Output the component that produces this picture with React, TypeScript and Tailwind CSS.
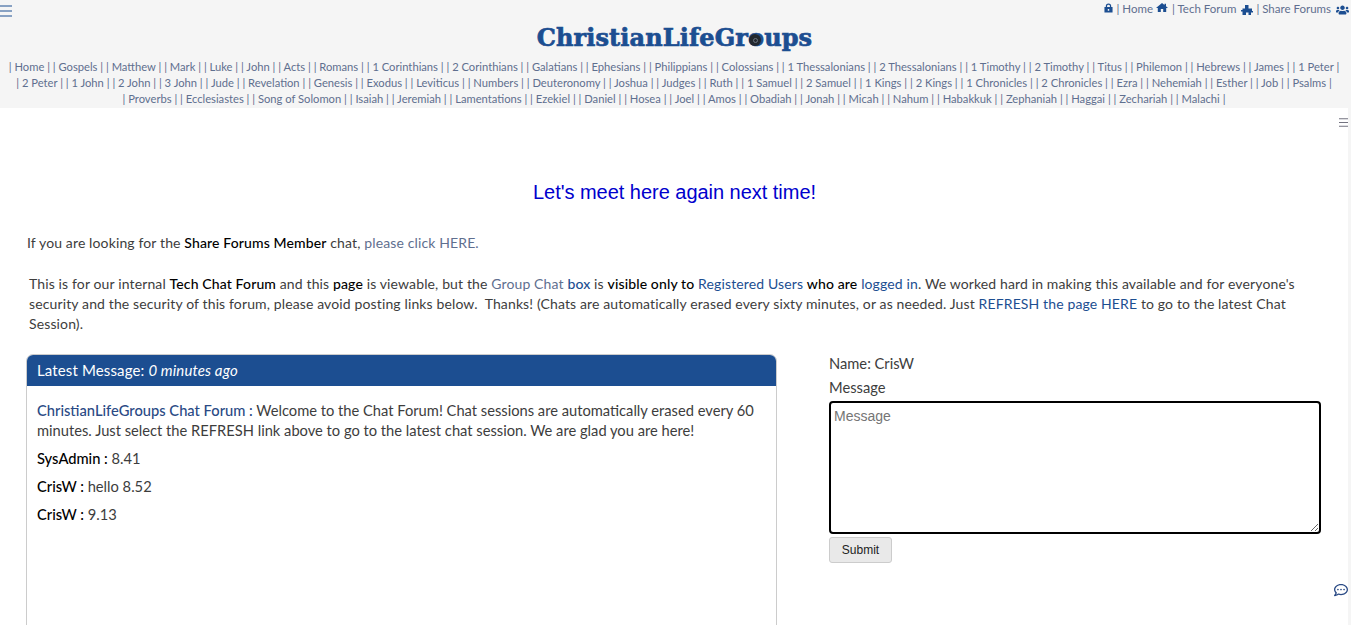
import { FaUsers, FaRegCommentDots } from 'react-icons/fa';

const bibleLines = [
  ['Home', 'Gospels', 'Matthew', 'Mark', 'Luke', 'John', 'Acts', 'Romans', '1 Corinthians', '2 Corinthians', 'Galatians', 'Ephesians', 'Philippians', 'Colossians', '1 Thessalonians', '2 Thessalonians', '1 Timothy', '2 Timothy', 'Titus', 'Philemon', 'Hebrews', 'James', '1 Peter'],
  ['2 Peter', '1 John', '2 John', '3 John', 'Jude', 'Revelation', 'Genesis', 'Exodus', 'Leviticus', 'Numbers', 'Deuteronomy', 'Joshua', 'Judges', 'Ruth', '1 Samuel', '2 Samuel', '1 Kings', '2 Kings', '1 Chronicles', '2 Chronicles', 'Ezra', 'Nehemiah', 'Esther', 'Job', 'Psalms'],
  ['Proverbs', 'Ecclesiastes', 'Song of Solomon', 'Isaiah', 'Jeremiah', 'Lamentations', 'Ezekiel', 'Daniel', 'Hosea', 'Joel', 'Amos', 'Obadiah', 'Jonah', 'Micah', 'Nahum', 'Habakkuk', 'Zephaniah', 'Haggai', 'Zechariah', 'Malachi'],
];

function Hamburger({ className }: { className: string }) {
  return (
    <svg viewBox="0 0 12 12" className={className} fill="none" stroke="currentColor" strokeWidth="1">
      <path d="M0 1h12M0 6h12M0 11h12" />
    </svg>
  );
}

function LockIcon() {
  return (
    <svg viewBox="0 0 10 10" className="mb-[3px] h-[10px] w-[9px]" fill="currentColor">
      <path fillRule="evenodd" d="M2 4V3a3 3 0 0 1 6 0v1h1.500v6H.5V4zM3.400 4h3.200V3a1.600 1.600 0 0 0-3.200 0zM4.200 6v2h1.600V6z" />
    </svg>
  );
}

function HomeIcon() {
  return (
    <svg viewBox="0 0 12 9" className="mb-[3px] h-[9px] w-[12px]" fill="currentColor">
      <path d="M6 0l2.500 2V.8h1.500v2.400L12 5h-1.800v4H7.200V6H4.800v3H1.800V5H0z" />
    </svg>
  );
}

function BranchIcon() {
  return (
    <svg viewBox="0 0 12 10" className="mt-[1px] h-[10px] w-[12px]" fill="currentColor">
      <path d="M4 0h3.500v3.500H11V6h1v1.500H10V10H7.500V7.500H5V10H1.500V6.500H0V5h1.500V3.500H4z" />
    </svg>
  );
}

export default function App() {
  return (
    <div className="relative h-[625px] overflow-hidden bg-white font-['Lato',sans-serif] text-[14px] tracking-[0.13px] text-[#3d3d3d]">
      <header className="relative h-[108px] bg-[#f5f5f5] pt-[25px] text-center tracking-normal">
        <Hamburger className="absolute left-0 top-[5px] h-[12px] w-[12px] text-[#1c4e91]" />
        <div className="absolute right-[2px] top-0 flex items-center text-[11.5px] leading-[18px] text-[#5f6f8f]">
          <span className="text-[#1c4e91]"><LockIcon /></span>
          <span className="ml-[4px]">| Home</span>
          <span className="ml-[3px] text-[#1c4e91]"><HomeIcon /></span>
          <span className="ml-[4px]">| Tech Forum</span>
          <span className="ml-[5px] text-[#1c4e91]"><BranchIcon /></span>
          <span className="ml-[3px]">| Share Forums</span>
          <FaUsers className="ml-[5px] mt-[2px] h-[14px] w-[13px] text-[#1c4e91]" />
        </div>
        <div className="pr-[2px] font-['DejaVu_Serif',serif] text-[24px] font-bold leading-[26px] tracking-[0.1px] text-[#1c4e91] [-webkit-text-stroke:0.7px_#1c4e91]">
          ChristianLifeGr
          <span className="relative">
            o
            <span className="absolute left-[calc(50%-1px)] top-[11px] flex h-[12px] w-[12px] -translate-x-1/2 items-center justify-center rounded-full bg-[#23282e] [-webkit-text-stroke:0]">
              <span className="h-[5px] w-[5px] rounded-full border border-[#6b7480]" />
            </span>
          </span>
          ups
        </div>
        <nav className="mt-[8px] pr-[3px] text-[11.2px] leading-[16px] text-[#5f6f8f]">
          {bibleLines.map((line, i) => (
            <div key={i} className="whitespace-nowrap">
              {line.map((b) => `| ${b} |`).join(' ')}
            </div>
          ))}
        </nav>
      </header>

      <main className="relative px-[27px]">
        <Hamburger className="absolute right-[3px] top-[10px] h-[9px] w-[9px] text-[#445]" />
        <h1 className="pt-[72px] pr-[2px] text-center font-['Liberation_Sans',sans-serif] text-[20px] leading-[24px] tracking-[-0.03px] text-[#0000cd]">Let's meet here again next time!</h1>
        <p className="mt-[29px] leading-[20px]">
          If you are looking for the <b className="font-medium text-black">Share Forums Member</b> chat, <span className="text-[#5f6f8f]">please click HERE.</span>
        </p>
        <div className="mt-[21px] ml-[2px] leading-[20px]">
          <div className="whitespace-nowrap">This is for our internal <b className="font-medium text-black">Tech Chat Forum</b> and this <b className="font-medium text-black">page</b> is viewable, but the <span className="text-[#5f6f8f]">Group Chat</span> <b className="font-medium text-[#1c4e91]">box</b> is <b className="font-medium text-black">visible only to</b> <span className="text-[#1c4e91]">Registered Users</span> <b className="font-medium text-black">who are</b> <span className="text-[#1c4e91]">logged in</span>. We worked hard in making this available and for everyone's</div>
          <div className="whitespace-nowrap">security and the security of this forum, please avoid posting links below.&nbsp; Thanks! (Chats are automatically erased every sixty minutes, or as needed. Just <span className="text-[#1c4e91]">REFRESH the page HERE</span> to go to the latest Chat</div>
          <div>Session).</div>
        </div>

        <div className="mt-[20px] flex items-start">
          <section className="-ml-px h-[300px] w-[751px] shrink-0 overflow-hidden rounded-t-[7px] border border-[#ccc]">
            <div className="h-[31px] bg-[#1c4e91] px-[10px] text-[15px] leading-[30px] text-white">
              Latest Message: <i>0 minutes ago</i>
            </div>
            <div className="px-[10px] pt-[14px] text-[14.7px] leading-[20px] tracking-normal">
              <p><b className="font-medium text-[#2a4a85]">ChristianLifeGroups Chat Forum :</b> Welcome to the Chat Forum! Chat sessions are automatically erased every 60 minutes. Just select the REFRESH link above to go to the latest chat session. We are glad you are here!</p>
              <p className="mt-[8px]"><b className="font-medium text-black">SysAdmin :</b> 8.41</p>
              <p className="mt-[8px]"><b className="font-medium text-black">CrisW :</b> hello 8.52</p>
              <p className="mt-[8px]"><b className="font-medium text-black">CrisW :</b> 9.13</p>
            </div>
          </section>

          <form className="ml-[52px] w-[492px] shrink-0 text-[14.7px] leading-[24px] tracking-normal">
            <div className="mt-[-3px]">Name: CrisW</div>
            <div>Message</div>
            <textarea
              placeholder="Message"
              className="mt-[2px] block h-[133px] w-[492px] rounded-[4px] border-2 border-black px-[3px] py-[5px] font-['Liberation_Sans',sans-serif] text-[14px] leading-[16px] placeholder:text-[#757575]"
            />
            <button type="button" className="mt-[3px] h-[26px] w-[63px] rounded-[3px] border border-[#ccc] bg-[#e9e9e9] font-['Liberation_Sans',sans-serif] text-[12px] leading-[16px] text-[#222]">Submit</button>
          </form>
        </div>

        <FaRegCommentDots className="absolute right-[3px] top-[475px] h-[14px] w-[14px] text-[#2a4a85]" />
      </main>
      <div className="absolute bottom-0 right-0 top-[108px] w-[3px] bg-[#f5f5f5]" />
    </div>
  );
}
